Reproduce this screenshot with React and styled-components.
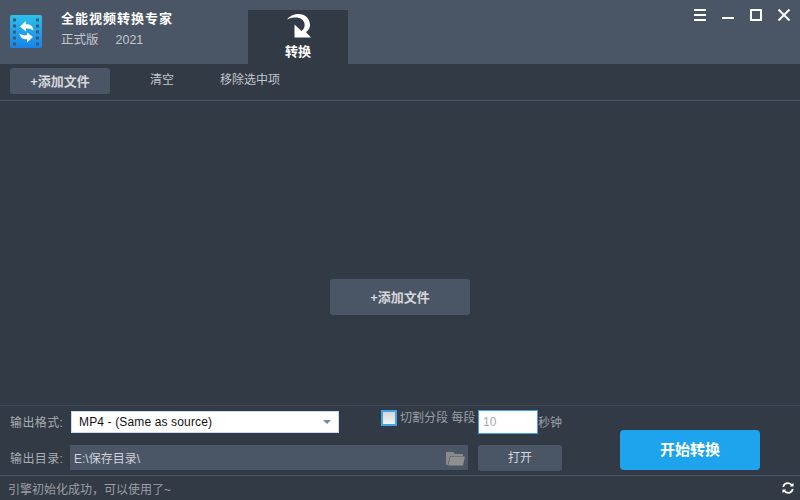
import React from 'react';
import styled, { createGlobalStyle } from 'styled-components';

const FONT = `"Liberation Sans", "Noto Sans CJK SC", sans-serif`;

const GlobalStyle = createGlobalStyle`
  html, body { margin: 0; padding: 0; background: #323a45; }
  * { box-sizing: border-box; }
`;

const Win = styled.div`
  width: 800px;
  height: 500px;
  display: flex;
  flex-direction: column;
  overflow: hidden;
  background: #323a45;
  font-family: ${FONT};
  font-size: 12px;
  color: #a9adb3;
`;

const Header = styled.div`
  height: 64px;
  flex: none;
  display: flex;
  background: #4a5566;
  padding-left: 10px;
`;

const Logo = styled.svg`
  width: 32px;
  height: 33px;
  margin-top: 15px;
  flex: none;
`;

const TitleBlock = styled.div`
  width: 187px;
  margin-left: 19px;
  padding-top: 10px;
`;

const AppName = styled.div`
  font-size: 13px;
  line-height: 18px;
  font-weight: 700;
  letter-spacing: 1px;
  color: #fff;
`;

const Edition = styled.div`
  display: flex;
  gap: 17px;
  margin-top: 3px;
  font-size: 12.5px;
  line-height: 18px;
  color: #c3c7cc;
`;

const Tab = styled.div`
  width: 100px;
  margin-top: 10px;
  background: #323a45;
  display: flex;
  flex-direction: column;
  align-items: center;
  padding-top: 4px;
`;

const TabIcon = styled.svg`
  width: 24px;
  height: 24px;
  margin-left: 2px;
  display: block;
`;

const TabLabel = styled.div`
  font-size: 13px;
  line-height: 16px;
  margin-top: 6px;
  font-weight: 700;
  color: #fff;
`;

const WinButtons = styled.div`
  margin-left: auto;
  display: flex;
  align-items: flex-start;
  gap: 16px;
  padding: 9px 10px 0 0;
`;

const WinIcon = styled.svg`
  width: 12px;
  height: 12px;
  display: block;
`;

const Toolbar = styled.div`
  height: 37px;
  flex: none;
  display: flex;
  align-items: flex-start;
  padding: 4px 0 0 10px;
  border-bottom: 1px solid #4a5566;
`;

const AddButton = styled.div`
  width: 100px;
  height: 26px;
  border-radius: 3px;
  background: #4a5566;
  color: #d6d8db;
  font-size: 13px;
  font-weight: 700;
  line-height: 28px;
  text-align: center;
`;

const ToolLink = styled.div`
  font-size: 12px;
  line-height: 25px;
  color: #c3c7cc;
  margin-left: ${(p) => p.$gap}px;
`;

const Main = styled.div`
  flex: 1;
  display: flex;
  align-items: center;
  justify-content: center;
  padding-top: 88px;
`;

const CenterButton = styled.div`
  width: 140px;
  height: 36px;
  border-radius: 3px;
  background: #4a5566;
  color: #d6d8db;
  font-size: 13px;
  font-weight: 700;
  line-height: 38px;
  text-align: center;
`;

const Footer = styled.div`
  height: 70px;
  flex: none;
  display: flex;
  border-top: 1px solid #414a58;
  padding: 4px 0 0 10px;
`;

const Fields = styled.div`
  width: 552px;
  flex: none;
`;

const FormatRow = styled.div`
  display: flex;
  align-items: flex-start;
  height: 35px;
`;

const DirRow = styled.div`
  display: flex;
  align-items: flex-start;
`;

const FieldLabel = styled.div`
  width: ${(p) => p.$w}px;
  flex: none;
  font-size: 12px;
  line-height: 22px;
  letter-spacing: 0.4px;
  padding-top: ${(p) => p.$top}px;
  white-space: nowrap;
`;

const SelectBox = styled.div`
  width: 268px;
  height: 22px;
  margin-top: 1px;
  flex: none;
  display: flex;
  align-items: center;
  justify-content: space-between;
  padding: 0 7px 0 7px;
  background: #fff;
  border: 1px solid #c4dcf0;
  color: #111;
  font-size: 12px;
  letter-spacing: 0.14px;
`;

const Caret = styled.span`
  width: 0;
  height: 0;
  border-left: 4px solid transparent;
  border-right: 4px solid transparent;
  border-top: 4px solid #6d8aa6;
`;

const Check = styled.div`
  width: 16px;
  height: 16px;
  margin-left: 42px;
  flex: none;
  border: 2px solid #44a3e4;
  background: linear-gradient(#d4d6d9, #f3f4f5);
`;

const SplitLabel = styled.div`
  width: 78px;
  flex: none;
  padding-left: 3px;
  font-size: 12px;
  line-height: 16px;
  white-space: nowrap;
  color: #9b9fa6;
`;

const SecondsInput = styled.div`
  width: 60px;
  height: 24px;
  margin-left: 3px;
  flex: none;
  background: #fff;
  border: 1px solid #44a3e4;
  padding-left: 4px;
  color: #a8a8b0;
  font-size: 12px;
  line-height: 22px;
`;

const Unit = styled.div`
  flex: none;
  font-size: 12px;
  line-height: 16px;
  margin-top: 5px;
  white-space: nowrap;
  color: #9b9fa6;
`;

const PathBox = styled.div`
  width: 398px;
  height: 25px;
  display: flex;
  align-items: center;
  justify-content: space-between;
  padding: 0 3px 0 4px;
  background: #4a5566;
  color: #d0d3d7;
  font-size: 12px;
`;

const OpenButton = styled.div`
  width: 84px;
  height: 26px;
  margin-left: 10px;
  border-radius: 3px;
  background: #4a5566;
  color: #d6d8db;
  font-size: 12px;
  line-height: 27px;
  text-align: center;
`;

const StartButton = styled.div`
  width: 140px;
  height: 40px;
  margin: 20px 0 0 58px;
  border-radius: 4px;
  background: #1ea4ec;
  color: #fff;
  font-size: 15px;
  font-weight: 700;
  line-height: 40px;
  text-align: center;
`;

const StatusBar = styled.div`
  height: 25px;
  flex: none;
  display: flex;
  align-items: center;
  justify-content: space-between;
  border-top: 1px solid #4a5566;
  padding: 0 6px 0 8px;
  font-size: 12px;
  color: #9b9fa6;
`;

function LogoIcon() {
  const holes = [5, 11, 17, 23, 29];
  return (
    <Logo viewBox="0 0 32 33">
      <defs>
        <linearGradient id="logoFill" x1="0" y1="0" x2="0" y2="1">
          <stop offset="0" stopColor="#2cc0ee" />
          <stop offset="1" stopColor="#1a83e6" />
        </linearGradient>
      </defs>
      <rect width="32" height="33" rx="2" fill="url(#logoFill)" />
      {holes.map((y) => (
        <React.Fragment key={y}>
          <rect x="3" y={y - 1.5} width="3" height="3" fill="#3a5a78" />
          <rect x="26" y={y - 1.5} width="3" height="3" fill="#3a5a78" />
        </React.Fragment>
      ))}
      <path d="M10 11.5 L16 6 V9.2 C20.5 9.2 23 11 23.5 15.5 C21 13.8 19 13.6 16 13.6 V16.5 Z" fill="#fff" />
      <path d="M23 22 L17 27.5 V24.3 C12.5 24.3 10 22.5 9.5 18.5 C12 20 14 20.2 17 20.2 V17.5 Z" fill="#fff" />
    </Logo>
  );
}

function RedoIcon() {
  return (
    <TabIcon viewBox="0 0 24 24">
      <path
        d="M0 5.5 C3 1.5 7.5 0 11.5 0 C18 0 23 4.5 23 11 C23 14 21.5 16.5 19 18 L24 23.5 H7.5 V10.5 L14.5 17 C17 15 18 12.5 17.5 9.5 C16.5 5.5 13 3.5 9 3.5 C6 3.5 3 4 0 5.5 Z"
        fill="#fff"
      />
    </TabIcon>
  );
}

function FolderIcon() {
  return (
    <svg width="19" height="16" viewBox="0 0 19 16">
      <path d="M0 2 H7 L9 4 H17 V6 H4 L1.5 15 H0 Z" fill="#8b8b8b" />
      <path d="M4.5 6.5 H19 L17 15.5 H2 Z" fill="#8f8f8f" />
    </svg>
  );
}

function SyncIcon() {
  return (
    <svg width="12" height="12" viewBox="0 0 12 12" fill="none" stroke="#fff" strokeWidth="1.8">
      <path d="M1.2 5 C1.8 2.6 3.6 1.2 6 1.2 C7.8 1.2 9 2 10 3.4" />
      <path d="M10.8 7 C10.2 9.4 8.4 10.8 6 10.8 C4.2 10.8 3 10 2 8.6" />
      <path d="M11.5 0.8 V4.6 H7.8 Z" fill="#fff" stroke="none" />
      <path d="M0.5 11.2 V7.4 H4.2 Z" fill="#fff" stroke="none" />
    </svg>
  );
}

export default function App() {
  return (
    <Win>
      <GlobalStyle />
      <Header>
        <LogoIcon />
        <TitleBlock>
          <AppName>全能视频转换专家</AppName>
          <Edition>
            <span>正式版</span>
            <span>2021</span>
          </Edition>
        </TitleBlock>
        <Tab>
          <RedoIcon />
          <TabLabel>转换</TabLabel>
        </Tab>
        <WinButtons>
          <WinIcon viewBox="0 0 12 12">
            <path d="M0 1 H12 M0 6 H12 M0 11 H12" stroke="#fff" strokeWidth="2" />
          </WinIcon>
          <WinIcon viewBox="0 0 12 12">
            <path d="M0 9 H12" stroke="#fff" strokeWidth="2" />
          </WinIcon>
          <WinIcon viewBox="0 0 12 12">
            <rect x="1" y="1" width="10" height="10" fill="none" stroke="#fff" strokeWidth="2" />
          </WinIcon>
          <WinIcon viewBox="0 0 12 12">
            <path d="M0.5 0.5 L11.5 11.5 M11.5 0.5 L0.5 11.5" stroke="#fff" strokeWidth="2" />
          </WinIcon>
        </WinButtons>
      </Header>
      <Toolbar>
        <AddButton>+添加文件</AddButton>
        <ToolLink $gap={40}>清空</ToolLink>
        <ToolLink $gap={46}>移除选中项</ToolLink>
      </Toolbar>
      <Main>
        <CenterButton>+添加文件</CenterButton>
      </Main>
      <Footer>
        <Fields>
          <FormatRow>
            <FieldLabel $w={61} $top={2}>输出格式:</FieldLabel>
            <SelectBox>
              MP4 - (Same as source)
              <Caret />
            </SelectBox>
            <Check />
            <SplitLabel>切割分段 每段</SplitLabel>
            <SecondsInput>10</SecondsInput>
            <Unit>秒钟</Unit>
          </FormatRow>
          <DirRow>
            <FieldLabel $w={60} $top={3}>输出目录:</FieldLabel>
            <PathBox>
              E:\保存目录\
              <FolderIcon />
            </PathBox>
            <OpenButton>打开</OpenButton>
          </DirRow>
        </Fields>
        <StartButton>开始转换</StartButton>
      </Footer>
      <StatusBar>
        引擎初始化成功，可以使用了~
        <SyncIcon />
      </StatusBar>
    </Win>
  );
}
